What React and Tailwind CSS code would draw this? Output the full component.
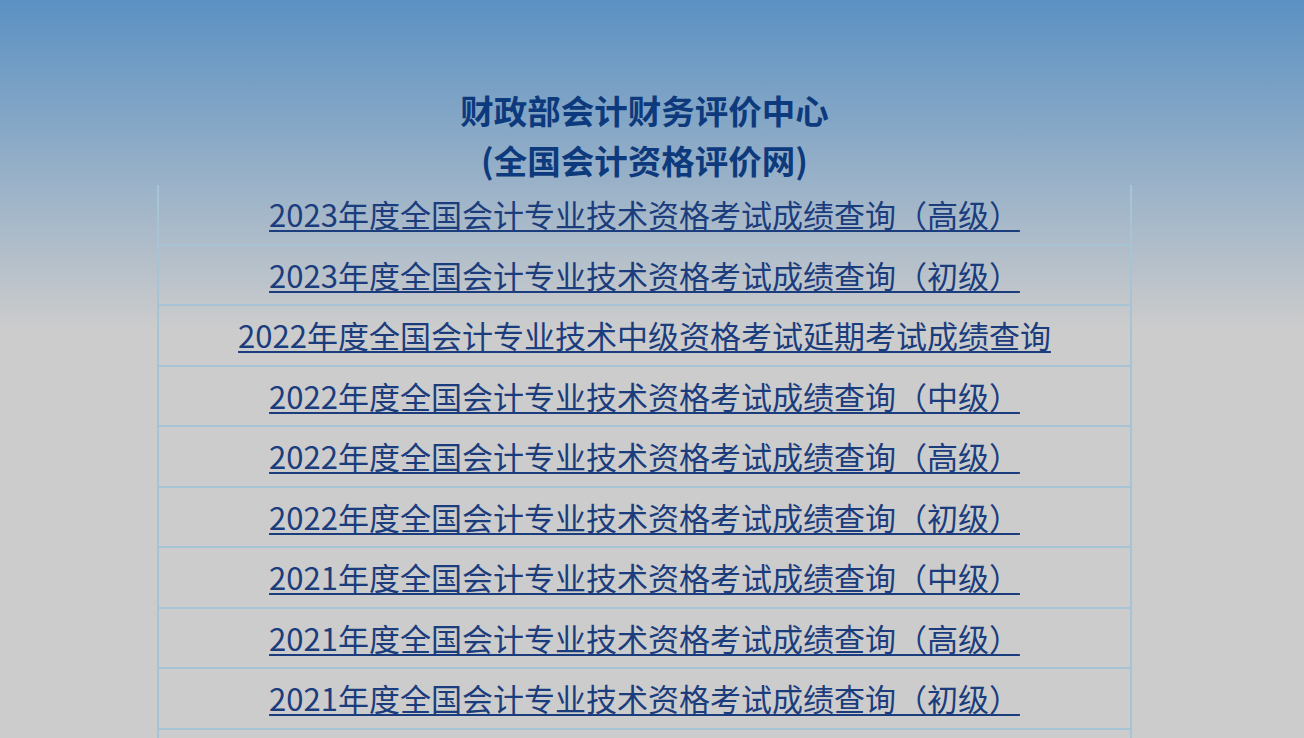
import React from 'react';

const rows = [
  '2023年度全国会计专业技术资格考试成绩查询（高级）',
  '2023年度全国会计专业技术资格考试成绩查询（初级）',
  '2022年度全国会计专业技术中级资格考试延期考试成绩查询',
  '2022年度全国会计专业技术资格考试成绩查询（中级）',
  '2022年度全国会计专业技术资格考试成绩查询（高级）',
  '2022年度全国会计专业技术资格考试成绩查询（初级）',
  '2021年度全国会计专业技术资格考试成绩查询（中级）',
  '2021年度全国会计专业技术资格考试成绩查询（高级）',
  '2021年度全国会计专业技术资格考试成绩查询（初级）',
];

const App = () => {
  return (
    <div
      className="h-screen overflow-hidden bg-[#cccccc] bg-[linear-gradient(to_bottom,#5b91c3_0px,#cccccc_330px)] pr-[15px]"
      style={{ fontFamily: '"Noto Sans CJK SC", "Noto Sans", sans-serif' }}
    >
      <div className="pt-[85px] text-center text-[33.5px] font-bold leading-[50px] text-[#0d3a7c]">
        <div>财政部会计财务评价中心</div>
        <div>(全国会计资格评价网)</div>
      </div>
      <div className="mx-auto w-[975px] border-x-2 border-[#a6c4d5]">
        {rows.map((title) => (
          <div
            key={title}
            className="flex h-[60.5px] items-center justify-center border-b-2 border-[#a6c4d5]"
          >
            <a
              href="#"
              className="text-[31px] leading-[40px] text-[#1b3d7d] underline decoration-[2px] underline-offset-[3px]"
            >
              {title}
            </a>
          </div>
        ))}
        <div className="h-[60.5px]" />
      </div>
    </div>
  );
};

export default App;
